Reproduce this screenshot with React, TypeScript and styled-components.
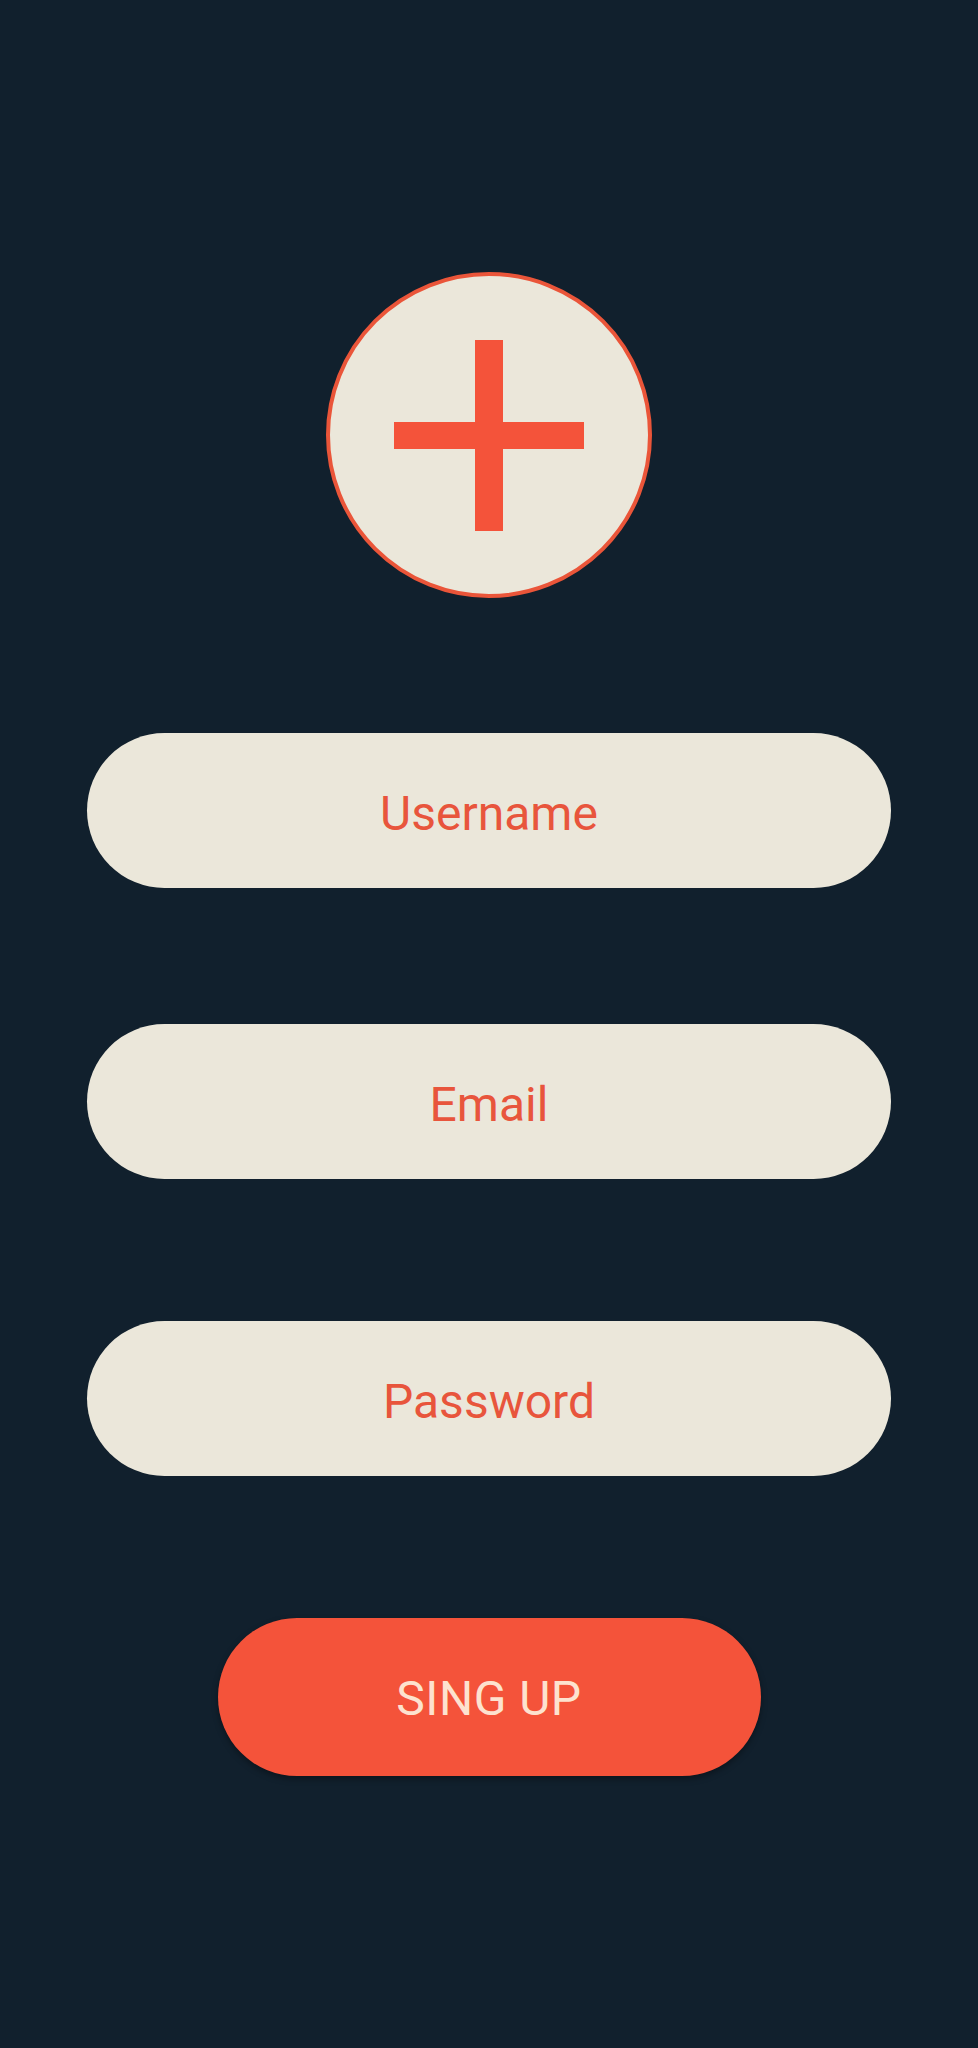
import React from "react";
import styled, { createGlobalStyle } from "styled-components";

const GlobalStyle = createGlobalStyle`
  html, body {
    margin: 0;
    padding: 0;
    background: #11202d;
  }
  * { box-sizing: border-box; }
`;

const Screen = styled.main`
  min-height: 2048px;
  background: #11202d;
  display: flex;
  flex-direction: column;
  align-items: center;
  padding-top: 272px;
  font-family: Roboto, "Noto Sans", sans-serif;
`;

const AvatarButton = styled.button`
  width: 326px;
  height: 326px;
  border-radius: 50%;
  background: #ebe7da;
  border: 4px solid #ea5539;
  padding: 0;
  display: flex;
  align-items: center;
  justify-content: center;
  cursor: pointer;
`;

const Form = styled.form`
  width: 100%;
  display: flex;
  flex-direction: column;
  align-items: center;
  margin-top: 135px;
`;

const Field = styled.input<{ $gap: number }>`
  width: 804px;
  height: 155px;
  border: none;
  border-radius: 78px;
  background: #ebe7da;
  color: #e8553c;
  font-family: Roboto, "Noto Sans", sans-serif;
  font-size: 48px;
  text-align: center;
  outline: none;
  padding: 5px 0 0;
  margin-top: ${(p) => p.$gap}px;
  &::placeholder {
    color: #e8553c;
    opacity: 1;
  }
`;

const SubmitButton = styled.button`
  width: 543px;
  height: 158px;
  margin-top: 142px;
  border: none;
  border-radius: 79px;
  background: #f4533a;
  color: #fde2cf;
  font-family: Roboto, "Noto Sans", sans-serif;
  font-size: 48px;
  letter-spacing: 0.5px;
  padding: 3px 0 0;
  box-shadow: 0 3px 6px rgba(0, 0, 0, 0.35);
  cursor: pointer;
`;

const PlusIcon = () => (
  <svg width="190" height="191" viewBox="0 0 190 191" aria-hidden="true">
    <rect x="81" y="0" width="28" height="191" fill="#f4533a" />
    <rect x="0" y="82" width="190" height="27" fill="#f4533a" />
  </svg>
);

export default function App() {
  return (
    <>
      <GlobalStyle />
      <Screen>
        <AvatarButton type="button" aria-label="Add photo">
          <PlusIcon />
        </AvatarButton>
        <Form onSubmit={(e) => e.preventDefault()}>
          <Field $gap={0} type="text" placeholder="Username" />
          <Field $gap={136} type="email" placeholder="Email" />
          <Field $gap={142} type="password" placeholder="Password" />
          <SubmitButton type="submit">SING UP</SubmitButton>
        </Form>
      </Screen>
    </>
  );
}
